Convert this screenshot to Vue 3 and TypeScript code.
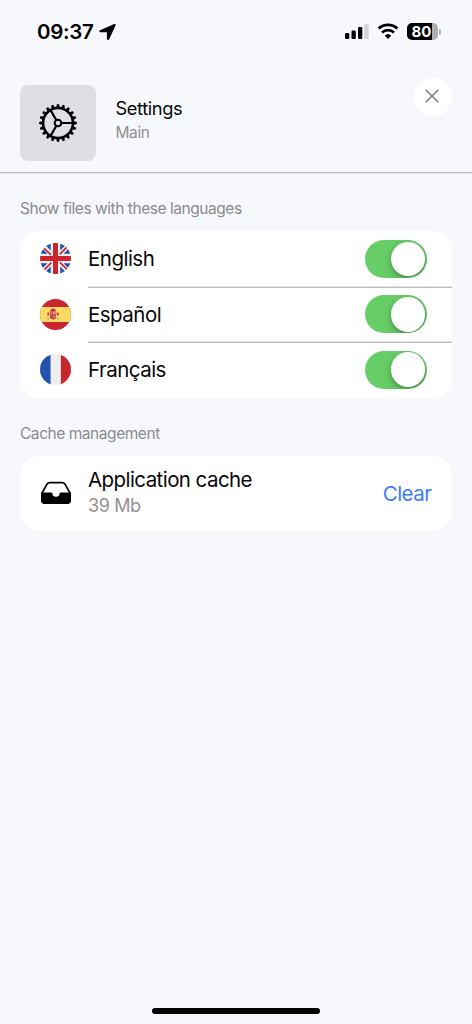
<script setup lang="ts">
import { reactive } from 'vue'

interface Language {
  code: string
  name: string
  enabled: boolean
}

const languages = reactive<Language[]>([
  { code: 'en', name: 'English', enabled: true },
  { code: 'es', name: 'Español', enabled: true },
  { code: 'fr', name: 'Français', enabled: true },
])

const teeth: number[] = Array.from({ length: 20 }, (_, i) => i * 18)
</script>

<template>
  <main class="screen">
    <div class="status">
      <span class="time">09:37</span>
      <svg class="arrow" width="18" height="18" viewBox="0 0 18 18">
        <path d="M15.2.9 1 7.2c-1 .5-.7 2.100.4 2.100h6.500v6.500c0 1.300 1.700 1.600 2.300.4L16.600 2.300c.4-.9-.4-1.800-1.400-1.400z" />
      </svg>
      <svg class="signal" width="25" height="17" viewBox="0 0 25 17">
        <rect x="0" y="10" width="4.3" height="6" rx="1.2" />
        <rect x="6.5" y="7.5" width="4.3" height="8.5" rx="1.2" />
        <rect x="13" y="4" width="4.3" height="12" rx="1.2" />
        <rect x="19.4" y="1" width="4.3" height="15" rx="1.2" fill="#d2d3d6" />
      </svg>
      <svg class="wifi" width="22" height="17" viewBox="0 0 22 17">
        <path d="M1.6 5.6a13.6 13.6 0 0 1 18.8 0" fill="none" stroke="#000" stroke-width="2.7" />
        <path d="M5 9.5a8.7 8.7 0 0 1 12 0" fill="none" stroke="#000" stroke-width="2.6" />
        <path d="M11 16l-3.3-3.4a4.8 4.8 0 0 1 6.6 0z" />
      </svg>
      <div class="battery"><span>80</span></div>
      <i class="tip"></i>
    </div>

    <header class="header">
      <div class="tile">
        <svg width="40" height="40" viewBox="-20 -20 40 40">
          <path v-for="a in teeth" :key="a" d="M14.5-2 18.2-1.2Q19-.9 19 0T18.2 1.2L14.5 2z" :transform="`rotate(${a})`" />
          <g fill="none" stroke="#000">
            <circle r="14.9" stroke-width="2.5" />
            <circle r="3.3" stroke-width="2.1" />
            <path d="M3.5 0H15M-1.8-3-7.5-13M-1.8 3-7.5 13" stroke-width="2.2" />
          </g>
        </svg>
      </div>
      <div class="heading">
        <h1>Settings</h1>
        <p>Main</p>
      </div>
      <button class="close" aria-label="Close">
        <svg width="14" height="14" viewBox="0 0 14 14">
          <path d="M.7.7l12.6 12.6M13.3.7.7 13.3" fill="none" stroke="#777779" stroke-width="1.4" />
        </svg>
      </button>
    </header>

    <h2 class="label languages-label">Show files with these languages</h2>
    <section class="card">
      <div v-for="lang in languages" :key="lang.code" class="row">
        <svg v-if="lang.code === 'en'" class="flag" viewBox="0 0 30 30">
          <clipPath id="disc"><circle cx="15" cy="15" r="15" /></clipPath>
          <g clip-path="url(#disc)">
            <path fill="#eee" d="M0 0h30v30H0z" />
            <path fill="#2451ae" d="M10.4 0v7.2L5.2 2zM19.6 0v7.2L24.8 2zM10.4 30v-7.2L5.2 28zM19.6 30v-7.2l5.2 5.2zM0 10.4h7.2L2 5.2zM30 10.4h-7.2L28 5.2zM0 19.6h7.2L2 24.8zM30 19.6h-7.2l5.2 5.2z" />
            <path d="M3.5 4.8 10.6 11.5M26.2 3.7 19 11M3.8 26.3 11 19M19.2 18.8l7.2 6.9" stroke="#c9252f" stroke-width="1.6" />
            <path fill="#c9252f" d="M12.6 0h4.8v12.6H30v4.8H17.4V30h-4.8V17.4H0v-4.8h12.6z" />
          </g>
        </svg>
        <svg v-else-if="lang.code === 'es'" class="flag" viewBox="0 0 30 30">
          <g clip-path="url(#disc)">
            <path fill="#c9252f" d="M0 0h30v30H0z" />
            <path fill="#fbdb63" d="M0 7.8h30v14.4H0z" />
          </g>
          <path fill="#c94b3c" d="M9.5 12h6.2v5.2q0 2.7-3.1 2.7t-3.1-2.7z" />
          <path fill="#c9252f" d="M10 10.2l2.6-1 2.6 1-.5 1.8h-4.2zM7.2 13h1.5v3H7.2zM16.5 13H18v3h-1.5z" />
          <path fill="#ef9da0" d="M12.7 12.4h2.2v2.5h-2.2z" />
          <path fill="#87629c" d="M11.7 14.6h1.9v2h-1.9z" />
          <path fill="#f2b544" d="M10.2 13h1.4v1.4h-1.4zM13.5 16.8h1.4V18h-1.4z" />
          <path fill="#5c86b8" d="M7.2 18.7h1.6v1H7.2zM16.4 18.7H18v1h-1.6z" />
          <path fill="#d8c7b0" d="M7.4 11.2h1.1V13H7.4zM7.4 16h1.1v2.7H7.4zM16.7 11.2h1.1V13h-1.1zM16.7 16h1.1v2.7h-1.1z" />
        </svg>
        <svg v-else class="flag" viewBox="0 0 30 30">
          <g clip-path="url(#disc)">
            <path fill="#eee" d="M0 0h30v30H0z" />
            <path fill="#2451ae" d="M0 0h10.2v30H0z" />
            <path fill="#c9252f" d="M20.2 0H30v30h-9.8z" />
          </g>
        </svg>
        <div class="row-body">
          <span class="name">{{ lang.name }}</span>
          <button class="toggle" :class="{ on: lang.enabled }" role="switch" :aria-checked="lang.enabled" :aria-label="lang.name" @click="lang.enabled = !lang.enabled"><i></i></button>
        </div>
      </div>
    </section>

    <h2 class="label cache-label">Cache management</h2>
    <section class="card cache">
      <svg class="tray" width="32" height="24" viewBox="0 0 32 24">
        <path d="M2 12 7 3.2Q8 1.6 9.8 1.6h12.4q1.8 0 2.8 1.6L30 12" fill="none" stroke="#000" stroke-width="1.7" />
        <path d="M1 11.4h10.2q1 0 1.2 1 .4 3.3 3.6 3.3t3.6-3.3q.2-1 1.2-1H31v8.2q0 3.4-3.4 3.4H4.4Q1 23 1 19.6z" />
      </svg>
      <div class="cache-text">
        <p class="title">Application cache</p>
        <p class="size">39 Mb</p>
      </div>
      <button class="clear">Clear</button>
    </section>
    <div class="home"></div>
  </main>
</template>

<style>
html, body { margin: 0; background: #f7f8fc; }
</style>

<style scoped>
* { box-sizing: border-box; }
.screen {
  display: flex;
  flex-direction: column;
  width: 472px;
  height: 1024px;
  overflow: hidden;
  background: #f7f8fc;
  color: #080809;
  font-family: Inter, "Liberation Sans", sans-serif;
}
h1, h2, p { margin: 0; font-weight: 400; }
button { border: 0; padding: 0; font: inherit; cursor: pointer; }
.status { display: flex; align-items: center; height: 64px; padding: 0 32px 1px 37px; flex: none; }
.time { width: 61px; font-size: 20.5px; font-weight: 600; letter-spacing: -0.3px; color: #000; }
.arrow { margin-left: 1px; }
.signal { margin-left: auto; }
.wifi { margin-left: 7px; }
.battery {
  display: flex;
  align-items: center;
  width: 31px;
  height: 17px;
  margin-left: 8px;
  padding-left: 4.5px;
  border-radius: 5px;
  background: linear-gradient(90deg, #000 80%, #aeaeb0 80%);
  color: #fff;
  font-size: 15px;
  font-weight: 700;
  line-height: 17px;
  letter-spacing: -0.1px;
}
.tip { width: 2px; height: 6px; margin: 0 -1px 0 1px; border-radius: 0 3px 3px 0; background: #b4b4b7; }
.header { display: flex; height: 108px; padding: 21px 20px 0; flex: none; box-shadow: 0 1px 0 #bfc0c7, 0 2px 0 #e0e1e6; }
.tile { display: grid; place-items: center; width: 76px; height: 76px; border-radius: 8px; background: #dedfe3; }
.heading { flex: 1; padding: 11px 0 0 19.5px; }
h1 { font-size: 18.3px; line-height: 24px; letter-spacing: -0.4px; }
.heading p { margin-top: 2px; font-size: 15.5px; line-height: 22px; letter-spacing: -0.4px; color: #8f8f92; }
.close { display: grid; place-items: center; width: 38px; height: 38px; margin: -7.5px 0 0; border-radius: 50%; background: #fff; }
.close svg { margin: 0 2px 1px 0; }
.label { flex: none; padding-left: 20px; color: #8b8b8f; font-size: 15.5px; line-height: 20px; letter-spacing: -0.45px; }
.languages-label { margin-top: 27px; }
.card { flex: none; width: 431.5px; margin: 12px 0 0 20px; border-radius: 19px; background: #fff; overflow: hidden; }
.row { display: flex; align-items: center; height: 55.5px; padding-left: 20px; }
.row:nth-child(1) { height: 56px; }
.row:nth-child(2) { height: 55px; }
.flag { width: 31px; height: 31px; }
.row:first-child .flag { margin-bottom: 1px; }
.row-body { display: flex; align-items: center; justify-content: space-between; flex: 1; height: 100%; margin-left: 17px; padding-right: 25px; box-shadow: inset 0 -1px 0 #e0e0e5, 0 1px 0 #bcbcc4; }
.row:last-child .row-body { box-shadow: none; }
.name { font-size: 20.5px; letter-spacing: -0.52px; }
.row:first-child .name { padding-bottom: 1px; }
.toggle { display: flex; align-items: center; width: 62px; height: 38px; margin-bottom: .5px; padding: 0 1.5px 0 2px; border-radius: 19px; background: #d9d9dd; overflow: hidden; }
.toggle i { width: 34.5px; height: 34.5px; border-radius: 50%; background: #fff; box-shadow: 0 3px 8px rgba(0, 0, 0, .25), 0 2px 3px rgba(0, 0, 0, .1); }
.toggle.on { justify-content: flex-end; background: #67ce67; }
.cache-label { margin-top: 26px; }
.cache { display: flex; align-items: center; height: 75.5px; padding: 0 20px; }
.cache-text { flex: 1; margin: 0 0 1px 16px; }
.title { font-size: 20.5px; line-height: 26px; letter-spacing: -0.57px; }
.size { color: #929295; font-size: 18px; line-height: 26px; letter-spacing: -0.4px; }
.clear { background: none; color: #397cf0; font-size: 20.5px; letter-spacing: -0.5px; }
.home { width: 168px; height: 6px; margin: auto auto 10px 152px; border-radius: 3px; background: #000; flex: none; }
</style>
